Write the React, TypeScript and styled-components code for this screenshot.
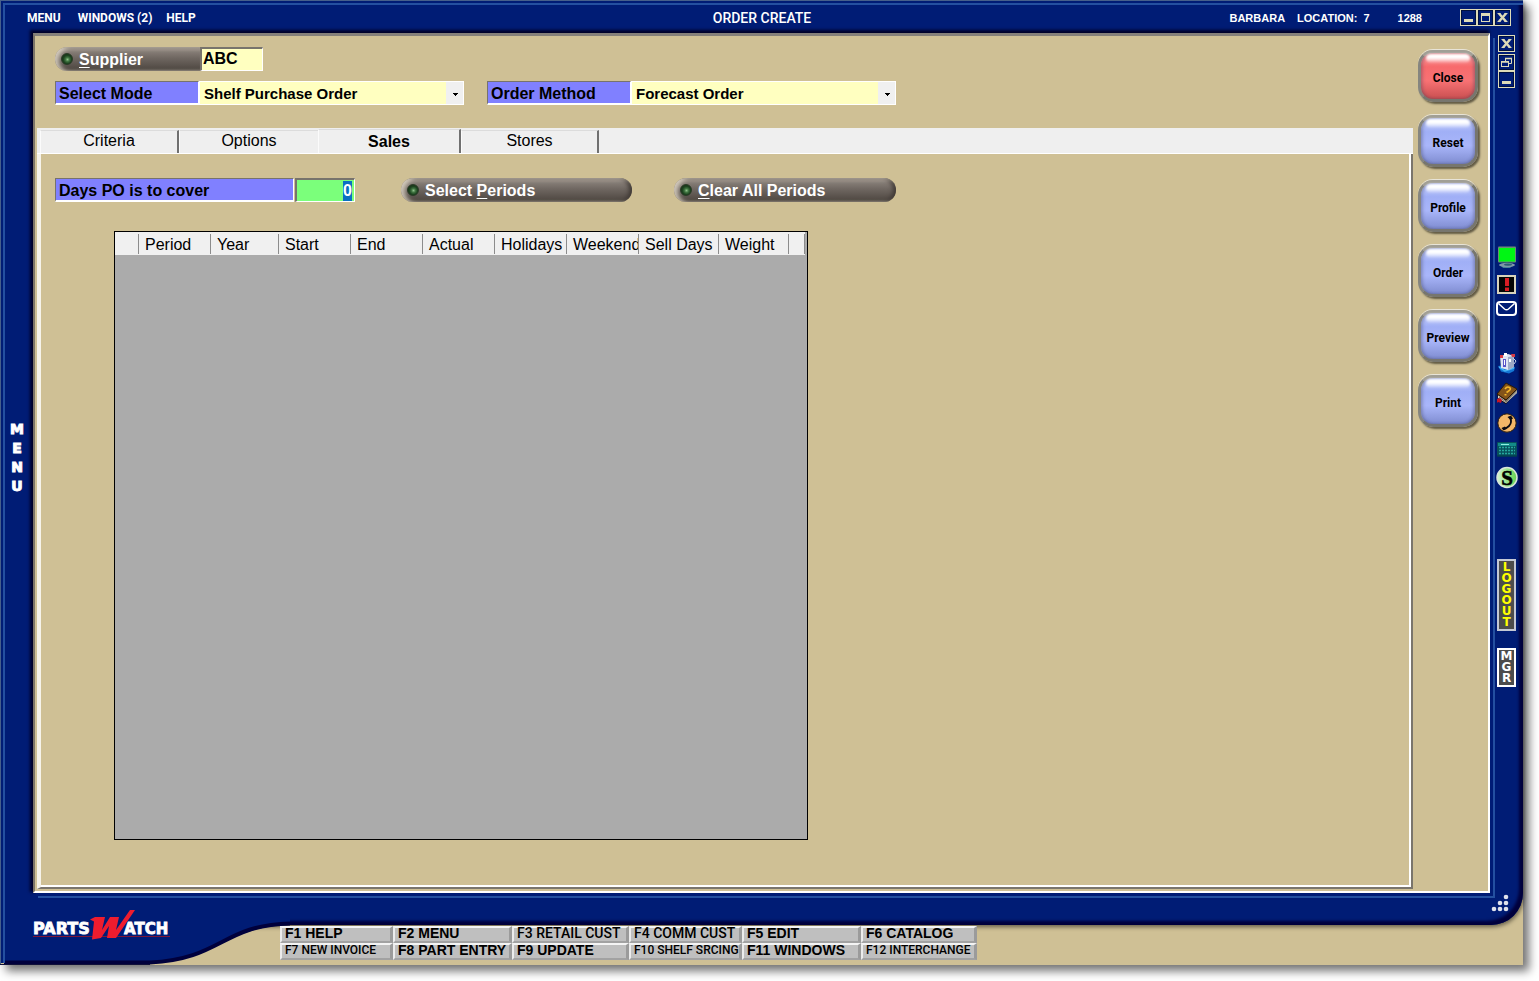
import React, { useEffect, useRef, useState } from "react";
import styled, { createGlobalStyle, css } from "styled-components";

const navy = "#001c75";
const navyEdge = "#00003c";
const navyLight = "#2450a0";
const tan = "#cfc095";
const cream = "#dedbb8";
const sans = `"Liberation Sans", Arial, sans-serif`;
const narrow = `Roboto, "Liberation Sans", sans-serif`;
const wide = `"DejaVu Sans", Verdana, sans-serif`;

const GlobalStyle = createGlobalStyle`
  *, *::before, *::after { box-sizing: border-box; }
  body { margin: 0; background: #fff; font-family: ${sans}; color: #000; }
  button, input, select { font: inherit; margin: 0; padding: 0; border: 0; border-radius: 0; }
  button { cursor: pointer; background: none; }
`;

const Page = styled.div`
  display: flex;
  min-height: 100vh;
  min-width: 1100px;
  padding: 0 16px 16px 0;
  overflow: hidden;
`;

const Window = styled.div`
  flex: 1;
  display: flex;
  flex-direction: column;
  background: ${tan};
  box-shadow: 6px 6px 9px rgba(0, 0, 0, 0.55);
`;

const Shell = styled.div`
  flex: 1;
  display: flex;
  flex-direction: column;
  background: ${navy};
  border-bottom-right-radius: 32px;
  border-top: 1px solid #46608a;
  border-left: 1px solid #46608a;
  box-shadow:
    inset 2px 2px 0 ${navy},
    inset 4px 4px 0 ${navyLight},
    inset -4px -4px 3px ${navyEdge},
    1px 2px 4px rgba(0, 0, 0, 0.5);
`;

const TopBar = styled.header`
  display: grid;
  grid-template-columns: 1fr auto 1fr;
  align-items: center;
  height: 32px;
  padding: 1px 12px 0;
  color: #fff;
`;

const MenuBar = styled.nav`
  display: flex;
  gap: 14px;
  padding-left: 14px;
`;

const MenuButton = styled.button<{ $gap?: boolean }>`
  font: 700 12px/16px ${narrow};
  color: #fff;
  margin-right: ${(p) => (p.$gap ? 3 : 0)}px;
`;

const Title = styled.h1`
  margin: 0;
  font: 500 14px/18px ${narrow};
`;

const Status = styled.div`
  display: flex;
  justify-content: flex-end;
  align-items: center;
  font: 700 11px/16px ${sans};
`;

const StatusItem = styled.span<{ $after: number }>`
  margin-right: ${(p) => p.$after}px;
`;

const SquareButton = styled.button`
  width: 17px;
  height: 17px;
  border: 1px solid ${cream};
  background: ${navy};
  svg { display: block; }
`;

const Middle = styled.div`
  flex: 1;
  display: flex;
`;

const LeftRail = styled.div`
  width: 32px;
  display: flex;
  align-items: center;
  justify-content: center;
  padding-bottom: 10px;
`;

const RailMenu = styled.button`
  display: flex;
  flex-direction: column;
  font: 700 14px/19px ${wide};
  color: #fff;
  -webkit-text-stroke: 1px #fff;
`;

const Panel = styled.main`
  flex: 1;
  display: flex;
  background: ${tan};
  border: solid;
  border-width: 3px 2px 2px 2px;
  border-color: #85807a #fff #fff #7c7468;
  box-shadow:
    3px 3px 0 ${navy},
    5px 5px 0 ${navyLight},
    -2px -2px 3px 1px #000028;
`;

const Work = styled.div`
  flex: 1;
  display: flex;
  flex-direction: column;
  margin: 0 0 2px 2px;
`;

const Header = styled.div`
  display: flex;
  flex-direction: column;
  gap: 10px;
  padding: 11px 18px 23px;
`;

const Row = styled.div<{ $gap?: number }>`
  display: flex;
  height: 24px;
  gap: ${(p) => p.$gap ?? 0}px;
`;

const sunken = css`
  border: solid;
  border-width: 2px 1px 1px 2px;
  border-color: #77736c #fff #fff #77736c;
`;

const FieldLabel = styled.label<{ $width: number }>`
  ${sunken}
  border-width: 1px 1px 2px 1px;
  width: ${(p) => p.$width}px;
  padding: 1px 0 0 3px;
  background: #8080ff;
  font: 700 16px/22px ${sans};
  white-space: nowrap;
`;

const Field = styled.div`
  display: flex;
`;

const SupplierInput = styled.input`
  ${sunken}
  width: 63px;
  padding: 0 0 1px 1px;
  background: #ffffc0;
  font: 700 16px/20px ${sans};
`;

const DaysInput = styled.input`
  ${sunken}
  width: 60px;
  padding-right: 2px;
  background: #7bff7b;
  font: 700 16px/20px ${sans};
  text-align: right;
  outline: none;
  &::selection { background: #0a6fc2; color: #fff; }
`;

const SelectBox = styled.div`
  position: relative;
  width: 265px;
  display: flex;
  border: 1px solid #fff;
`;

const SelectInput = styled.select`
  appearance: none;
  width: 100%;
  padding: 1px 20px 0 4px;
  background: #ffffc0;
  color: #000;
  font: 700 15px/20px ${sans};
`;

const SelectArrow = styled.span`
  position: absolute;
  top: 0;
  right: 0;
  bottom: 0;
  width: 17px;
  display: grid;
  place-items: center;
  padding: 2px 0 0 2px;
  background: #f0f0f0;
  pointer-events: none;
`;

const Pill = styled.button<{ $width: number; $square?: boolean }>`
  width: ${(p) => p.$width}px;
  display: flex;
  align-items: center;
  gap: 6px;
  padding-left: 6px;
  border-radius: ${(p) => (p.$square ? "12px 0 0 12px" : "12px")};
  background: linear-gradient(#675f58, #8b827b 3px, #6f6761 11px, #504943 22px, #6d655c);
  box-shadow:
    inset 4px 1px 4px rgba(235, 225, 210, 0.75)
    ${(p) => (p.$square ? "" : ", inset -4px 0 4px -1px #403a35")};
  color: #fff;
  font: 700 16px/24px ${sans};
  white-space: nowrap;
  > span:last-child { padding-top: 1px; }
  u { text-underline-offset: 2px; text-decoration-thickness: 1px; }
`;

const Led = styled.span`
  width: 12px;
  height: 12px;
  border-radius: 50%;
  border: 1px solid #2a3a26;
  background: radial-gradient(circle at 55% 55%, #8fc08a 0, #3f7440 2px, #1d4420 4px, #173317 6px);
`;

const TabStrip = styled.div`
  display: flex;
  align-items: flex-end;
  height: 26px;
  padding-left: 3px;
  background: #efefef;
  border-bottom: 1px solid #fff;
`;

const Tab = styled.button<{ $width: number; $active?: boolean; $edge: boolean }>`
  width: ${(p) => p.$width}px;
  height: ${(p) => (p.$active ? 24 : 23)}px;
  padding-bottom: ${(p) => (p.$active ? 0 : 2)}px;
  border-top: 1px solid #dcdcdc;
  border-left: 1px solid #fbfbfb;
  border-right: ${(p) => (p.$edge ? "2px solid #707070" : "0")};
  font: ${(p) => (p.$active ? 700 : 400)} 16px/20px ${sans};
`;

const TabBody = styled.section`
  flex: 1;
  display: flex;
  flex-direction: column;
  align-items: flex-start;
  padding: 24px 14px 47px;
  border: solid;
  border-width: 0 2px 2px 4px;
  border-color: #7a756c #7a756c #7a756c #f6f3ea;
  box-shadow: inset -2px -2px 0 #fff;
`;

const Spacer = styled.span<{ $width: number }>`
  width: ${(p) => p.$width}px;
`;

const Grid = styled.div`
  flex: 1;
  width: 694px;
  min-height: 300px;
  margin: 29px 0 0 59px;
  border: 1px solid #000;
  background: #ababab;
`;

const PeriodTable = styled.table`
  width: 690px;
  table-layout: fixed;
  border-collapse: collapse;
  background: #f0f0f0;
`;

const HeadCell = styled.th<{ $width: number }>`
  width: ${(p) => p.$width}px;
  height: 23px;
  padding: 2px 0 1px;
  font: 400 16px/21px ${sans};
  text-align: left;
`;

const HeadText = styled.span`
  display: block;
  height: 20px;
  padding-left: 6px;
  border-right: 1px solid #8c8c8c;
  overflow: hidden;
  white-space: nowrap;
`;

const Actions = styled.div`
  width: 75px;
  display: flex;
  flex-direction: column;
  gap: 13px;
  padding: 14px 0 0 5px;
`;

const ActionButton = styled.button<{ $red?: boolean }>`
  position: relative;
  width: 60px;
  height: 52px;
  padding-top: 3px;
  border: 3px solid;
  border-color: #a19f96 #77766e #77766e #85857f;
  border-radius: 15px;
  background: linear-gradient(
    ${(p) => (p.$red ? "#fba0a0, #f76a6c 30%, #f87274 60%, #c94f50" : "#c4cffc, #a0aff6 30%, #a9b6fa 60%, #7f8cd0")}
  );
  box-shadow:
    inset 2px 0 3px rgba(60, 60, 90, 0.3),
    inset -2px 0 3px rgba(60, 60, 90, 0.3),
    0 -1px 0 #e8e4d8,
    2px 2px 2px #625b45;
  color: #000;
  font: 700 12px/16px ${narrow};
  text-align: center;
  &::before {
    content: "";
    position: absolute;
    top: 1px;
    left: 5px;
    right: 5px;
    height: 9px;
    border-radius: 6px;
    background: linear-gradient(#fff, #fff 40%, rgba(255, 255, 255, 0.1));
    filter: blur(1px);
  }
`;

const RightRail = styled.aside`
  width: 33px;
  display: flex;
  flex-direction: column;
  align-items: center;
  padding-top: 2px;
`;

const RailSlot = styled.div<{ $top: number }>`
  margin-top: ${(p) => p.$top}px;
  display: flex;
  flex-direction: column;
  svg { display: block; }
`;

const IconButton = styled.button`
  display: block;
`;

const VerticalButton = styled.button<{ $color: string; $edge: string }>`
  display: flex;
  flex-direction: column;
  align-items: center;
  width: 19px;
  padding: 1px 0;
  border: 2px solid ${(p) => p.$edge};
  background: #4c4c4c;
  color: ${(p) => p.$color};
  font: 700 12px/11px ${wide};
`;

const BottomBar = styled.div`
  display: flex;
  justify-content: flex-end;
  height: 32px;
  padding: 1px 14px 0 0;
`;

const Footer = styled.footer`
  position: relative;
  height: 40px;
  padding: 1px 0 0 280px;
`;

const Swoosh = styled.svg`
  position: absolute;
  left: 0;
  bottom: 0;
  overflow: visible;
`;

const Keys = styled.div`
  display: grid;
  grid-template-columns: 113px 119px 117px 113px 119px 116px;
  grid-template-rows: 17px 17px;
  width: 697px;
`;

const Key = styled.button<{ $size: "large" | "medium" | "small" }>`
  padding: 0 0 3px 3px;
  border: solid;
  border-width: 2px 3px 2px 2px;
  border-color: #f4f4f4 #9b9b9b #a2a2a2 #ececec;
  background: #bfbfbf;
  color: #000;
  font: ${(p) => (p.$size === "large" ? `700 14px/10px ${sans}` : p.$size === "medium" ? `500 14px/10px ${narrow}` : `500 12px/10px ${narrow}`)};
  text-align: left;
  white-space: nowrap;
`;

type Glyph = "min" | "max" | "close" | "restore";

function WindowGlyph({ kind }: { kind: Glyph }) {
  return (
    <svg width="15" height="15" viewBox="0 0 15 15" fill="none" stroke={cream}>
      <rect x="0.5" y="0.5" width="14" height="14" stroke="#00103f" />
      {kind === "min" && <path d="M3 10.5h9" strokeWidth="3" />}
      {kind === "max" && (
        <>
          <rect x="3.5" y="3.5" width="8" height="8" />
          <path d="M3 4.500h9" strokeWidth="3" />
        </>
      )}
      {kind === "close" && (
        <>
          <path d="M4 3.5l7 8M11 3.5l-7 8" strokeWidth="2.5" />
          <path d="M2.5 3.5h3M9.5 3.5h3M2.5 11.5h3M9.5 11.5h3" />
        </>
      )}
      {kind === "restore" && (
        <>
          <path d="M6.5 6V3.5h6v5H10" />
          <path d="M6 3.5h7M2 7h8" strokeWidth="1.5" />
          <rect x="2.5" y="6.5" width="7" height="5" />
        </>
      )}
    </svg>
  );
}

const MonitorIcon = () => (
  <svg width="20" height="23" viewBox="0 0 20 23">
    <path d="M4 19.5l6-2 7 1-4 3.5H6z" fill="#3f7f92" />
    <ellipse cx="10" cy="19" rx="8" ry="2.2" fill="#7d98a8" />
    <ellipse cx="11" cy="18.6" rx="4" ry="1.2" fill="#2b5e72" />
    <rect x="1" y="0.5" width="18" height="16" rx="1" fill="#6c8b76" />
    <rect x="2" y="2" width="16" height="13.5" fill="#00f614" />
  </svg>
);

const AlertIcon = () => (
  <svg width="19" height="19" viewBox="0 0 19 19">
    <rect x="1" y="1" width="17" height="17" fill="#050505" stroke="#d8d3bb" strokeWidth="2" />
    <path d="M8 3h4v8H8zM8 12.5h4V16H8z" fill="#d81c24" />
  </svg>
);

const MailIcon = () => (
  <svg width="21" height="15" viewBox="0 0 21 15" fill="none" stroke="#fff" strokeWidth="2">
    <rect x="1" y="1" width="19" height="13" rx="3" />
    <path d="M2.5 2.5l6 5.500q2 1.500 4 0l6-5.500" strokeWidth="1.500" />
  </svg>
);

const MailboxIcon = () => (
  <svg width="20" height="22" viewBox="0 0 20 22">
    <path d="M1 14l7-1 10 2-1 4-5 2.500-8-2z" fill="#1476d4" />
    <path d="M2 15l6 4 9-3" fill="none" stroke="#48b4f4" strokeWidth="1.500" />
    <path d="M3 4l8-2 6 2v11l-6 3-7-2z" fill="#dfe5f2" />
    <path d="M11 5v13l6-3V4z" fill="#9daac6" />
    <path d="M6 7h3v8H6z" fill="#5a54c8" />
    <path d="M7 8h1v5H7z" fill="#fff" />
    <path d="M3 3h3v3H3zM14 2h4v3h-3z" fill="#d63a44" />
    <path d="M7 1h3v3H7zM12 7h2v3h-2z" fill="#fff" />
    <path d="M16 6l3 3-2 3" fill="none" stroke="#c9d2e4" />
  </svg>
);

const BookIcon = () => (
  <svg width="22" height="23" viewBox="0 0 22 23">
    <path d="M1 12l1 5 8 5 11-12V7z" fill="#1b1208" />
    <path d="M2 13l8 6L21 8v3L10 21l-8-5z" fill="#dcd9cc" />
    <path d="M3 15l7 5L21 9.500" fill="none" stroke="#77736a" />
    <path d="M10 1l11 6-11 11L1 12z" fill="#83541a" stroke="#2a1a08" />
    <path d="M9 7q2-3 4.500-1.500T12 9.500l-1.500 1" fill="none" stroke="#f5b72a" strokeWidth="1.600" />
    <path d="M8.500 12h2v1.500h-2z" fill="#f5b72a" />
    <path d="M1 17l3-1 2 2-1 3-3-1-1 1z" fill="#c51724" />
  </svg>
);

const PhoneIcon = () => (
  <svg width="20" height="20" viewBox="0 0 20 20">
    <circle cx="10" cy="10" r="9.200" fill="#f3b768" stroke="#2a1c0c" />
    <path d="M13 4.500q2.500 5-1 8.500-2.500 2.500-5 2.500" fill="none" stroke="#0b0b12" strokeWidth="1.800" />
    <path d="M10.500 4l3.500-1.500 2 3-2.500 1.500zM4.500 15l3.500-1.500 1.500 2.500-3 1.500z" fill="#0b0b12" />
  </svg>
);

const CalculatorIcon = () => (
  <svg width="20" height="15" viewBox="0 0 20 15">
    <rect width="20" height="14.500" rx="1" fill="#07515c" />
    <path d="M1 1h18v3H1z" fill="#138a88" />
    <path d="M4 2h8v1H4z" fill="#8ff0e0" />
    {[5, 8, 11].map((y) => (
      <path key={y} d={`M2 ${y + 0.5}h16`} stroke="#25a99e" strokeWidth="1.500" strokeDasharray="2 1" />
    ))}
    <path d="M0 14h20" stroke="#033a48" />
  </svg>
);

const DollarIcon = () => (
  <svg width="22" height="23" viewBox="0 0 22 23">
    <defs>
      <linearGradient id="coin">
        <stop offset="0" stopColor="#d6f6ce" />
        <stop offset="1" stopColor="#63d24e" />
      </linearGradient>
    </defs>
    <circle cx="11" cy="11.500" r="10" fill="url(#coin)" stroke="#d9e6da" strokeWidth="1.500" />
    <text x="11" y="18.500" textAnchor="middle" fontFamily="Liberation Serif, serif" fontWeight="700" fontSize="21" stroke="#000" strokeWidth="0.600">S</text>
  </svg>
);

const Letters = ({ text }: { text: string }) => (
  <>
    {text.split("").map((c, i) => (
      <span key={i}>{c}</span>
    ))}
  </>
);

function ComboField({ id, label, value }: { id: string; label: string; value: string }) {
  return (
    <Field>
      <FieldLabel htmlFor={id} $width={144}>{label}</FieldLabel>
      <SelectBox>
        <SelectInput id={id} defaultValue={value}>
          <option>{value}</option>
        </SelectInput>
        <SelectArrow>
          <svg width="5" height="3" viewBox="0 0 5 3"><path d="M0 0h5v1H0zM1 1h3v1H1zM2 2h1v1H2z" /></svg>
        </SelectArrow>
      </SelectBox>
    </Field>
  );
}

const tabs = [
  { name: "Criteria", width: 139 },
  { name: "Options", width: 139 },
  { name: "Sales", width: 143 },
  { name: "Stores", width: 138 },
];

const columns: [string, number][] = [
  ["", 24], ["Period", 72], ["Year", 68], ["Start", 72], ["End", 72], ["Actual", 72],
  ["Holidays", 72], ["Weekend", 72], ["Sell Days", 80], ["Weight", 70], ["", 16],
];

const keys: [string, "large" | "medium" | "small"][] = [
  ["F1 HELP", "large"], ["F2 MENU", "large"], ["F3 RETAIL CUST", "medium"],
  ["F4 COMM CUST", "medium"], ["F5 EDIT", "large"], ["F6 CATALOG", "large"],
  ["F7 NEW INVOICE", "small"], ["F8 PART ENTRY", "large"], ["F9 UPDATE", "large"],
  ["F10 SHELF SRCING", "small"], ["F11 WINDOWS", "large"], ["F12 INTERCHANGE", "small"],
];

export default function App() {
  const [active, setActive] = useState("Sales");
  const days = useRef<HTMLInputElement>(null);

  useEffect(() => {
    days.current?.focus();
    days.current?.select();
  }, []);

  return (
    <Page>
      <GlobalStyle />
      <Window>
        <Shell>
          <TopBar>
            <MenuBar>
              <MenuButton $gap>MENU</MenuButton>
              <MenuButton>WINDOWS (2)</MenuButton>
              <MenuButton>HELP</MenuButton>
            </MenuBar>
            <Title>ORDER CREATE</Title>
            <Status>
              <StatusItem $after={12}>BARBARA</StatusItem>
              <StatusItem $after={6}>LOCATION:</StatusItem>
              <StatusItem $after={28}>7</StatusItem>
              <StatusItem $after={38}>1288</StatusItem>
              <SquareButton aria-label="Minimize"><WindowGlyph kind="min" /></SquareButton>
              <SquareButton aria-label="Maximize"><WindowGlyph kind="max" /></SquareButton>
              <SquareButton aria-label="Close window"><WindowGlyph kind="close" /></SquareButton>
            </Status>
          </TopBar>

          <Middle>
            <LeftRail>
              <RailMenu aria-label="MENU"><Letters text="MENU" /></RailMenu>
            </LeftRail>

            <Panel>
              <Work>
                <Header>
                  <Row>
                    <Pill $width={145} $square><Led /><span><u>S</u>upplier</span></Pill>
                    <SupplierInput aria-label="Supplier" defaultValue="ABC" />
                  </Row>
                  <Row $gap={23}>
                    <ComboField id="mode" label="Select Mode" value="Shelf Purchase Order" />
                    <ComboField id="method" label="Order Method" value="Forecast Order" />
                  </Row>
                </Header>

                <TabStrip role="tablist">
                  {tabs.map((t, i) => (
                    <Tab
                      key={t.name}
                      role="tab"
                      aria-selected={active === t.name}
                      $width={t.width}
                      $active={active === t.name}
                      $edge={tabs[i + 1]?.name !== active}
                      onClick={() => setActive(t.name)}
                    >
                      {t.name}
                    </Tab>
                  ))}
                </TabStrip>

                <TabBody role="tabpanel">
                  <Row>
                    <FieldLabel htmlFor="days" $width={239}>Days PO is to cover</FieldLabel>
                    <Spacer $width={1} />
                    <DaysInput id="days" ref={days} defaultValue="0" />
                    <Spacer $width={46} />
                    <Pill $width={231}><Led /><span>Select <u>P</u>eriods</span></Pill>
                    <Spacer $width={42} />
                    <Pill $width={222}><Led /><span><u>C</u>lear All Periods</span></Pill>
                  </Row>
                  <Grid>
                    <PeriodTable>
                      <thead>
                        <tr>
                          {columns.map(([name, width], i) => (
                            <HeadCell key={i} $width={width}><HeadText>{name}</HeadText></HeadCell>
                          ))}
                        </tr>
                      </thead>
                    </PeriodTable>
                  </Grid>
                </TabBody>
              </Work>

              <Actions>
                <ActionButton $red>Close</ActionButton>
                {["Reset", "Profile", "Order", "Preview", "Print"].map((name) => (
                  <ActionButton key={name}>{name}</ActionButton>
                ))}
              </Actions>
            </Panel>

            <RightRail>
              <RailSlot $top={0}><SquareButton aria-label="Close form"><WindowGlyph kind="close" /></SquareButton></RailSlot>
              <RailSlot $top={2}>
                <SquareButton aria-label="Restore form"><WindowGlyph kind="restore" /></SquareButton>
                <SquareButton aria-label="Minimize form"><WindowGlyph kind="min" /></SquareButton>
              </RailSlot>
              <RailSlot $top={158}><IconButton aria-label="Connection"><MonitorIcon /></IconButton></RailSlot>
              <RailSlot $top={6}><IconButton aria-label="Alerts"><AlertIcon /></IconButton></RailSlot>
              <RailSlot $top={7}><IconButton aria-label="Mail"><MailIcon /></IconButton></RailSlot>
              <RailSlot $top={36}><IconButton aria-label="Mailbox"><MailboxIcon /></IconButton></RailSlot>
              <RailSlot $top={8}><IconButton aria-label="Help book"><BookIcon /></IconButton></RailSlot>
              <RailSlot $top={8}><IconButton aria-label="Phone"><PhoneIcon /></IconButton></RailSlot>
              <RailSlot $top={9}><IconButton aria-label="Calculator"><CalculatorIcon /></IconButton></RailSlot>
              <RailSlot $top={9}><IconButton aria-label="Sales"><DollarIcon /></IconButton></RailSlot>
              <RailSlot $top={70}>
                <VerticalButton aria-label="LOGOUT" $color="#ff0" $edge="#c4c8d4"><Letters text="LOGOUT" /></VerticalButton>
              </RailSlot>
              <RailSlot $top={17}>
                <VerticalButton aria-label="MGR" $color="#fff" $edge="#fff"><Letters text="MGR" /></VerticalButton>
              </RailSlot>
            </RightRail>
          </Middle>

          <BottomBar>
            <svg width="18" height="18" viewBox="0 0 18 18" fill="#dfe2ec">
              <circle cx="15" cy="3" r="2.300" />
              <circle cx="9" cy="9" r="2.300" />
              <circle cx="15" cy="9" r="2.300" />
              <circle cx="3" cy="15" r="2.300" />
              <circle cx="9" cy="15" r="2.300" />
              <circle cx="15" cy="15" r="2.300" />
            </svg>
          </BottomBar>
        </Shell>

        <Footer>
          <Swoosh width="290" height="60" viewBox="0 0 290 60">
            <path d="M1 10H290V20C222 22 222 55 150 58H1z" fill={navy} />
            <path d="M290 18.500C222 20 222 54 150 57.500H4" fill="none" stroke={navyEdge} strokeWidth="4" />
            <path d="M0.500 10V60" stroke="#46608a" />
            <path d="M4 10V58" stroke={navyLight} strokeWidth="2" />
            <path d="M0 59.500H150" stroke="#10103a" />
            <g fill="#fff" stroke="#fff" strokeWidth="0.800" fontFamily="DejaVu Sans, sans-serif" fontWeight="700">
              <text x="33" y="29" fontSize="16">PARTS</text>
              <text x="124" y="29" fontSize="15">ATCH</text>
            </g>
            <path d="M33 31.500H170" stroke="#7d1638" />
            <path d="M95 12h10l-3 13 8-13h9l-3 13 14-20h5l-19 28h-9l2-12-8 12-9 1.500 2-18-4-2z" fill="#ee1c2e" />
          </Swoosh>
          <Keys>
            {keys.map(([name, size]) => (
              <Key key={name} $size={size}>{name}</Key>
            ))}
          </Keys>
        </Footer>
      </Window>
    </Page>
  );
}
